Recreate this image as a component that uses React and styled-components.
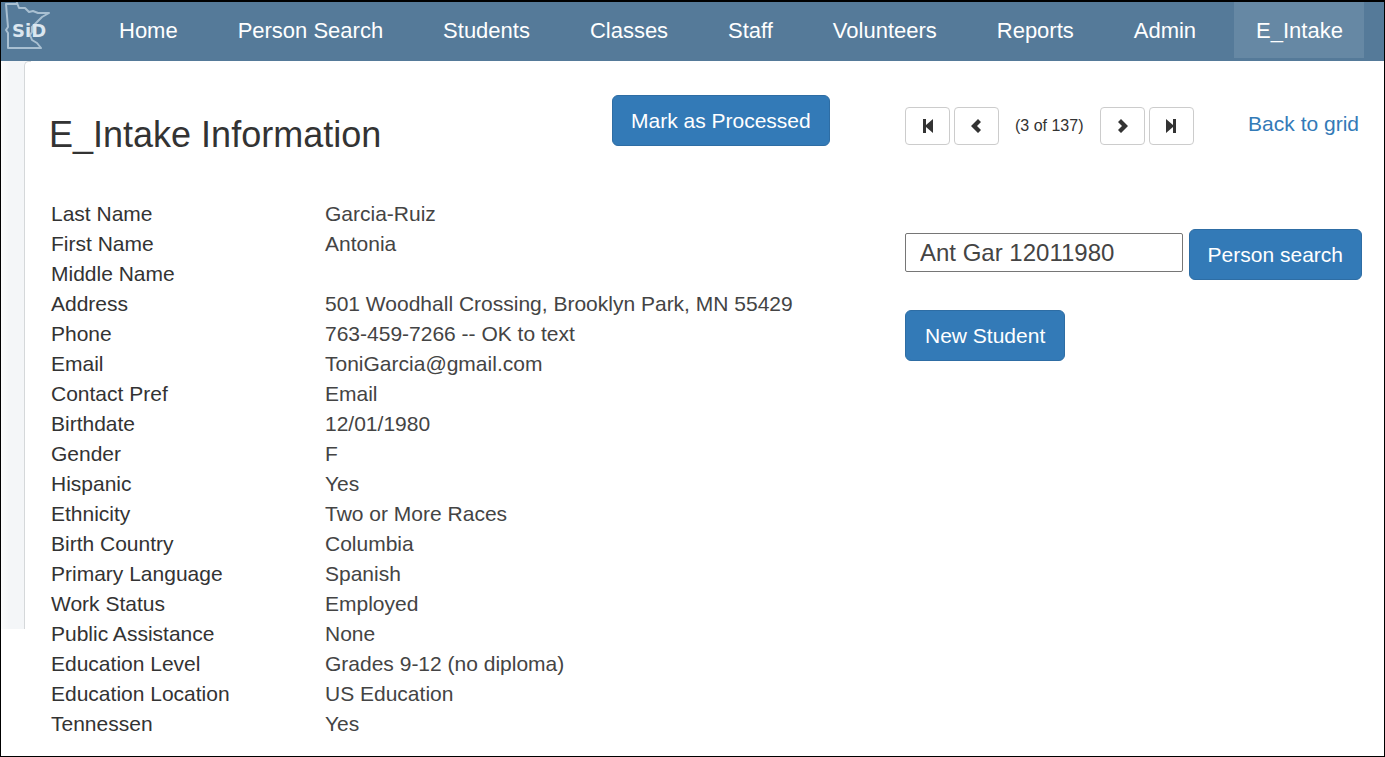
import React, { useState } from 'react';
import styled, { createGlobalStyle } from 'styled-components';

const GlobalStyle = createGlobalStyle`
    * {
        box-sizing: border-box;
    }

    body {
        margin: 0;
        background-color: #fff;
        color: #333;
        font-family: "Liberation Sans", Arial, sans-serif;
        font-size: 21px;
        line-height: 30px;
    }
`;

const Page = styled.div`
    display: flex;
    flex-direction: column;
    min-height: 100vh;
    border: 1px solid #000;
    border-top-width: 2px;
`;

const NavBar = styled.nav`
    display: flex;
    align-items: flex-start;
    height: 59px;
    padding-right: 20px;
    background-color: #557a99;
`;

const LogoLink = styled.a`
    display: block;
    height: 50px;
    padding-left: 3px;
`;

const NavList = styled.ul`
    display: flex;
    flex: 1;
    justify-content: space-between;
    margin: 0 0 0 45px;
    padding: 0;
    list-style: none;
`;

const NavLink = styled.a`
    display: block;
    padding: 2px 21px 0 22px;
    font-size: 22px;
    line-height: 54px;
    color: #fff;
    text-decoration: none;
    white-space: nowrap;
    background-color: ${props => props.$active ? '#6688a4' : 'transparent'};
`;

const Body = styled.div`
    display: flex;
    flex: 1;
    align-items: flex-start;
`;

const Gutter = styled.div`
    width: 30px;
    height: 568px;
    padding-left: 23px;
    background: linear-gradient(to right, #fbfcfc, #f4f6f8 8px);
`;

const GutterEdge = styled.div`
    height: 100%;
    background-color: #fff;
    border: 1px solid #d5d8da;
    border-width: 1px 0 0 1px;
    border-top-left-radius: 5px;
`;

const Panel = styled.main`
    flex: 1;
    padding: 34px 22px 16px 18px;
`;

const Columns = styled.div`
    display: grid;
    grid-template-columns: minmax(0, 563fr) minmax(0, 293fr) minmax(0, 457fr);
    align-items: start;
`;

const HeaderRow = styled(Columns)`
    min-height: 104px;
`;

const Title = styled.h1`
    margin: 20px 0 0;
    font-size: 36px;
    font-weight: normal;
    line-height: 40px;
`;

const PrimaryButton = styled.button`
    justify-self: start;
    height: 51px;
    padding: 0 18px;
    font: inherit;
    color: #fff;
    background-color: #337ab7;
    border: 1px solid #2e6da4;
    border-radius: 6px;
    white-space: nowrap;
    cursor: pointer;

    &:hover {
        background-color: #286090;
    }
`;

const Pager = styled.div`
    display: flex;
    align-items: center;
    gap: 4px;
    padding: 12px 3px 0 0;
`;

const PagerButton = styled.button`
    display: flex;
    align-items: center;
    justify-content: center;
    width: 45px;
    height: 38px;
    padding: 0;
    color: #333;
    background-color: #fff;
    border: 1px solid #ccc;
    border-radius: 4px;
    cursor: pointer;
`;

const PagerText = styled.span`
    padding: 0 12px;
    font-size: 16px;
`;

const BackLink = styled.a`
    margin-left: auto;
    padding-bottom: 4px;
    color: #337ab7;
    text-decoration: none;
    white-space: nowrap;
`;

const Details = styled.dl`
    display: grid;
    grid-column: span 2;
    grid-template-columns: 274px 1fr;
    grid-auto-rows: 30px;
    margin: 0;
    padding-left: 2px;
`;

const Label = styled.dt`
    margin: 0;
`;

const Value = styled.dd`
    margin: 0;
    color: #444;
`;

const Actions = styled.div`
    display: flex;
    flex-direction: column;
    align-items: stretch;
    gap: 30px;
    padding-top: 30px;
`;

const SearchForm = styled.form`
    display: flex;
    align-items: center;
    gap: 6px;
`;

const SearchInput = styled.input`
    flex: 1;
    min-width: 0;
    height: 39px;
    margin: 0 0 4px;
    padding: 0 14px;
    font: inherit;
    font-size: 24px;
    color: #444;
    background-color: #fff;
    border: 1px solid #767676;
    border-radius: 2px;
`;

const NewStudentButton = styled(PrimaryButton)`
    align-self: flex-start;
    padding: 0 19px;
`;

const LogoText = styled.text`
    font-family: "DejaVu Sans", sans-serif;
    font-size: 18px;
    font-weight: bold;
`;

const navItems = ['Home', 'Person Search', 'Students', 'Classes', 'Staff', 'Volunteers', 'Reports', 'Admin', 'E_Intake'];

const intake = [
    ['Last Name', 'Garcia-Ruiz'],
    ['First Name', 'Antonia'],
    ['Middle Name', ''],
    ['Address', '501 Woodhall Crossing, Brooklyn Park, MN 55429'],
    ['Phone', '763-459-7266 -- OK to text'],
    ['Email', 'ToniGarcia@gmail.com'],
    ['Contact Pref', 'Email'],
    ['Birthdate', '12/01/1980'],
    ['Gender', 'F'],
    ['Hispanic', 'Yes'],
    ['Ethnicity', 'Two or More Races'],
    ['Birth Country', 'Columbia'],
    ['Primary Language', 'Spanish'],
    ['Work Status', 'Employed'],
    ['Public Assistance', 'None'],
    ['Education Level', 'Grades 9-12 (no diploma)'],
    ['Education Location', 'US Education'],
    ['Tennessen', 'Yes'],
];

function Logo() {
    return (
        <svg width="48" height="50" viewBox="0 0 48 50" role="img" aria-label="SiD">
            <path
                d="M2 2 H12 L13 1 L15 6 L21 6 L25 10 L29 9 L34 11 L45 11 L38 15 L31 22 L28 25 V30 L26 33 L28 38 L33 41 L37 46 H4 V31 L2 28 L4 25 L3 14 Z"
                fill="none"
                stroke="#a9c0d2"
                strokeWidth="2"
                strokeLinejoin="round"
            />
            <LogoText x="8" y="35" fill="#dbe6ef">SiD</LogoText>
        </svg>
    );
}

const pagerPaths = {
    first: 'M3 1 H6 V7 L13 1 V15 L6 9 V15 H3 Z',
    prev: 'M9 1 L12 4 L8 8 L12 12 L9 15 L2 8 Z',
    next: 'M7 1 L4 4 L8 8 L4 12 L7 15 L14 8 Z',
    last: 'M13 1 H10 V7 L3 1 V15 L10 9 V15 H13 Z',
};

function PagerIcon({ name }) {
    return (
        <svg width="16" height="16" viewBox="0 0 16 16" aria-hidden="true">
            <path d={pagerPaths[name]} fill="currentColor" />
        </svg>
    );
}

function App() {
    const [query, setQuery] = useState('Ant Gar 12011980');
    const [record, setRecord] = useState(3);
    const total = 137;

    return (
        <Page>
            <GlobalStyle />
            <NavBar>
                <LogoLink href="#home"><Logo /></LogoLink>
                <NavList>
                    {navItems.map((item) => (
                        <li key={item}>
                            <NavLink href="#" $active={item === 'E_Intake'}>{item}</NavLink>
                        </li>
                    ))}
                </NavList>
            </NavBar>
            <Body>
                <Gutter><GutterEdge /></Gutter>
                <Panel>
                    <HeaderRow>
                        <Title>E_Intake Information</Title>
                        <PrimaryButton type="button">Mark as Processed</PrimaryButton>
                        <Pager>
                            <PagerButton aria-label="First" onClick={() => setRecord(1)}>
                                <PagerIcon name="first" />
                            </PagerButton>
                            <PagerButton aria-label="Previous" onClick={() => setRecord(Math.max(1, record - 1))}>
                                <PagerIcon name="prev" />
                            </PagerButton>
                            <PagerText>({record} of {total})</PagerText>
                            <PagerButton aria-label="Next" onClick={() => setRecord(Math.min(total, record + 1))}>
                                <PagerIcon name="next" />
                            </PagerButton>
                            <PagerButton aria-label="Last" onClick={() => setRecord(total)}>
                                <PagerIcon name="last" />
                            </PagerButton>
                            <BackLink href="#grid">Back to grid</BackLink>
                        </Pager>
                    </HeaderRow>
                    <Columns>
                        <Details>
                            {intake.map(([label, value]) => (
                                <React.Fragment key={label}>
                                    <Label>{label}</Label>
                                    <Value>{value}</Value>
                                </React.Fragment>
                            ))}
                        </Details>
                        <Actions>
                            <SearchForm onSubmit={(e) => e.preventDefault()}>
                                <SearchInput
                                    aria-label="Person search"
                                    value={query}
                                    onChange={(e) => setQuery(e.target.value)}
                                />
                                <PrimaryButton type="submit">Person search</PrimaryButton>
                            </SearchForm>
                            <NewStudentButton type="button">New Student</NewStudentButton>
                        </Actions>
                    </Columns>
                </Panel>
            </Body>
        </Page>
    );
}

export default App;
